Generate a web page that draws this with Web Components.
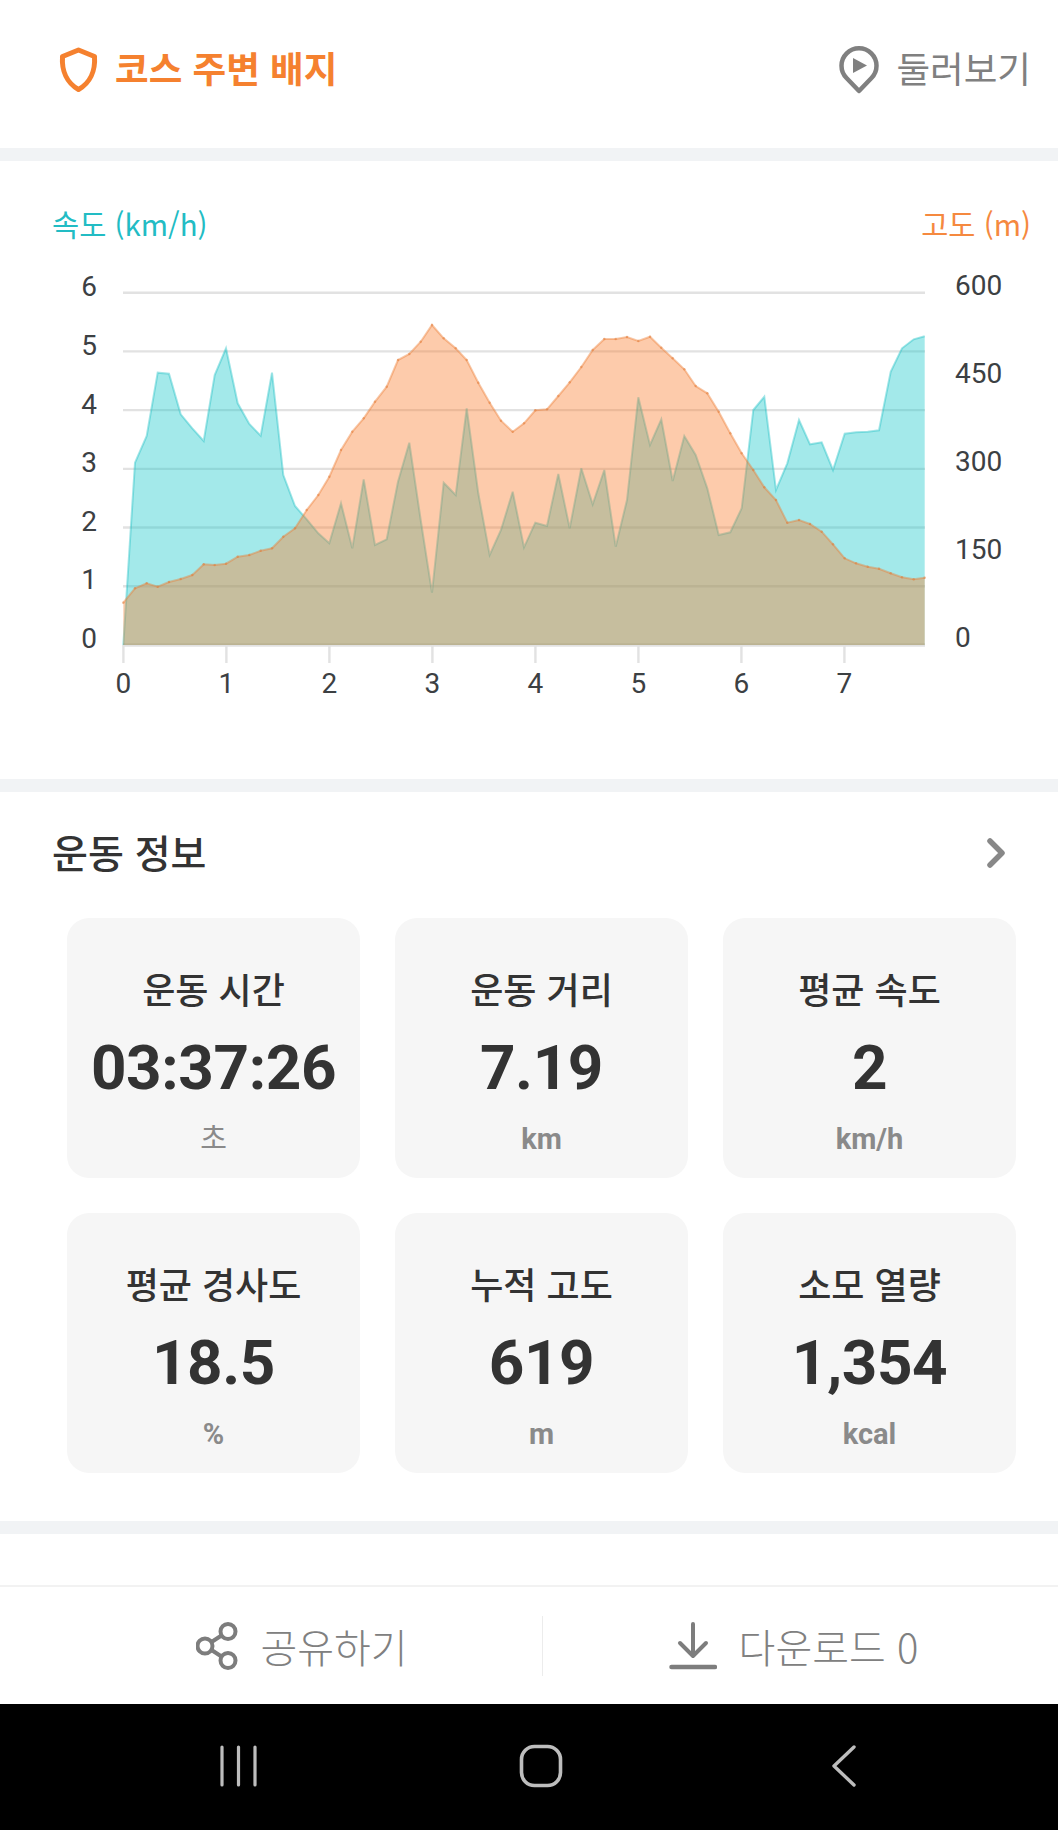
<!DOCTYPE html>
<html lang="ko">
<head>
<meta charset="utf-8">
<title>코스 기록</title>
<style>
  html, body { margin: 0; padding: 0; background: #fff; }
  body { font-family: "Noto Sans CJK KR", Roboto, sans-serif; width: 1058px; height: 1830px; overflow: hidden; }
</style>
</head>
<body>
  <course-head></course-head>
  <pace-chart></pace-chart>
  <stat-panel heading="운동 정보">
    <stat-card label="운동 시간" value="03:37:26" unit="초" plain></stat-card>
    <stat-card label="운동 거리" value="7.19" unit="km"></stat-card>
    <stat-card label="평균 속도" value="2" unit="km/h"></stat-card>
    <stat-card label="평균 경사도" value="18.5" unit="%"></stat-card>
    <stat-card label="누적 고도" value="619" unit="m"></stat-card>
    <stat-card label="소모 열량" value="1,354" unit="kcal"></stat-card>
  </stat-panel>
  <action-bar></action-bar>
  <soft-keys></soft-keys>

<script>
class CourseHead extends HTMLElement {
  constructor() {
    super();
    this.attachShadow({ mode: 'open' });
  }

  connectedCallback() {
    this.shadowRoot.innerHTML = `
      <style>
        :host {
          display: flex;
          justify-content: space-between;
          align-items: center;
          box-sizing: border-box;
          height: 148px;
          padding: 0 27px 8px 58px;
          font-family: "Noto Sans CJK KR", sans-serif;
        }
        .side { display: flex; align-items: center; }
        .side span { margin-bottom: 5px; }
        .badge { color: #f5812f; font-size: 36.6px; font-weight: 700; gap: 17px; }
        .tour { color: #808080; font-size: 36.6px; gap: 17px; }
        svg { display: block; fill: none; }
      </style>
      <div class="side badge">
        <svg width="40" height="46" viewBox="0 0 40 46">
          <path d="M20.5 3 L36.5 9.5 C37.5 24 32 36 20.5 42.5 C9 36 3.5 24 4.5 9.5 Z"
                stroke="#f5812f" stroke-width="5" stroke-linejoin="round"/>
        </svg>
        <span>코스 주변 배지</span>
      </div>
      <div class="side tour">
        <svg width="40" height="48" viewBox="0 0 40 48">
          <path d="M20 45 L7.5 32 A17.5 17.5 0 1 1 32.5 32 Z"
                stroke="#808080" stroke-width="4.5" stroke-linejoin="round"/>
          <path d="M14 12 L28 19.5 L14 27 Z" fill="#808080"/>
        </svg>
        <span>둘러보기</span>
      </div>
    `;
  }
}

// x positions and values for both series, in units of a third of a pixel
const SAMPLE_X = [190,225,260,293,327,362,397,431,464,498,533,568,602,636,670,705,740,775,808,843,877,911,945,980,1014,1048,1082,1116,1151,1187,1220,1255,1289,1323,1358,1392,1426,1461,1495,1529,1564,1598,1633,1667,1701,1735,1770,1804,1838,1873,1907,1942,1976,2011,2045,2080,2113,2148,2182,2217,2250,2285,2319,2354,2388,2423,2457,2492,2526,2561,2594];
const SPEED_Y = [1155,608,528,338,341,463,505,543,345,265,430,492,527,338,645,738,778,820,850,730,865,658,855,838,665,548,780,998,668,705,445,700,885,810,695,862,788,798,642,805,625,733,630,860,720,412,555,478,663,528,585,685,825,817,745,450,410,690,610,480,553,547,630,521,517,515,511,335,265,238,229];
const ALTITUDE_Y = [1028,985,970,980,966,957,945,913,915,911,890,885,872,865,830,805,750,705,650,570,515,475,425,380,300,282,245,195,235,265,300,368,428,482,515,490,451,448,408,367,321,270,237,237,231,243,230,263,295,328,378,400,455,520,580,630,682,720,788,780,792,815,853,895,910,920,926,940,952,958,953];

class PaceChart extends HTMLElement {
  constructor() {
    super();
    this.attachShadow({ mode: 'open' });
  }

  connectedCallback() {
    const px = (x) => (60 + x / 3).toFixed(1);
    const py = (y) => (y / 3).toFixed(1);
    const line = (ys) => ys.map((y, i) => `${px(SAMPLE_X[i])},${py(y)}`).join(' ');
    const area = (ys) => `${px(190)},${py(1155)} ${line(ys)} ${px(2594)},${py(1155)}`;

    const left = [0, 1, 2, 3, 4, 5, 6];
    const right = [0, 150, 300, 450, 600];
    const ticks = [0, 1, 2, 3, 4, 5, 6, 7];

    const grid = left.map((n) => {
      const y = 385 - n * 58.72;
      return `<line x1="123" x2="925" y1="${y}" y2="${y}" stroke="#e2e2e2" stroke-width="${n ? 2.4 : 3.5}"/>`;
    }).join('');
    const tickMarks = ticks.map((n) => {
      const x = 123.4 + n * 103;
      return `<line x1="${x}" x2="${x}" y1="385" y2="403" stroke="#e2e2e2" stroke-width="2.4"/>
              <text x="${x}" y="433" text-anchor="middle">${n}</text>`;
    }).join('');
    const leftLabels = left.map((n) => `<text x="89" y="${388 - n * 58.6}" text-anchor="middle">${n}</text>`).join('');
    const rightLabels = right.map((n, i) => `<text x="955" y="${387 - i * 88}">${n}</text>`).join('');
    const dots = ALTITUDE_Y.map((y, i) => `<circle cx="${px(SAMPLE_X[i])}" cy="${py(y)}" r="1.2"/>`).join('');

    this.shadowRoot.innerHTML = `
      <style>
        :host {
          display: block;
          box-sizing: border-box;
          height: 631px;
          border-top: 13px solid #f1f3f5;
          font-family: "Noto Sans CJK KR", sans-serif;
        }
        .legend {
          display: flex;
          justify-content: space-between;
          box-sizing: border-box;
          height: 99px;
          padding: 44px 27px 0 52px;
          font-size: 29.5px;
          line-height: 36px;
        }
        .speed { color: #22bcc4; }
        .altitude { color: #f5893f; }
        svg { display: block; }
        text { font-family: Roboto, sans-serif; font-size: 28px; fill: #3c4043; }
      </style>
      <div class="legend">
        <span class="speed">속도 (km/h)</span>
        <span class="altitude">고도 (m)</span>
      </div>
      <svg width="1058" height="460" viewBox="0 0 1058 460">
        ${grid}
        ${tickMarks}
        ${leftLabels}
        ${rightLabels}
        <polygon points="${area(SPEED_Y)}" fill="rgba(25,200,202,.4)"/>
        <polyline points="${line(SPEED_Y)}" fill="none" stroke="rgba(25,190,195,.4)" stroke-width="2"/>
        <polygon points="${area(ALTITUDE_Y)}" fill="rgba(250,125,45,.4)"/>
        <polyline points="${line(ALTITUDE_Y)}" fill="none" stroke="rgba(235,125,50,.42)" stroke-width="2"/>
        <g fill="rgba(225,120,50,.5)">${dots}</g>
      </svg>
    `;
  }
}

class StatPanel extends HTMLElement {
  constructor() {
    super();
    this.attachShadow({ mode: 'open' });
  }

  connectedCallback() {
    this.shadowRoot.innerHTML = `
      <style>
        :host {
          display: block;
          box-sizing: border-box;
          height: 755px;
          border-top: 13px solid #f1f3f5;
          border-bottom: 13px solid #f1f3f5;
          font-family: "Noto Sans CJK KR", sans-serif;
        }
        header {
          display: flex;
          justify-content: space-between;
          align-items: center;
          box-sizing: border-box;
          height: 122px;
          padding: 0 53px 0 52px;
          margin-bottom: 4px;
        }
        h2 { margin: 0 0 4px; font-size: 39px; font-weight: 500; color: #333; line-height: 1; }
        .grid {
          display: grid;
          grid-template-columns: repeat(3, 293px);
          gap: 35px;
          padding-left: 67px;
        }
        svg { display: block; fill: none; }
      </style>
      <header>
        <h2>${this.getAttribute('heading')}</h2>
        <svg width="18" height="30" viewBox="0 0 18 30">
          <path d="M3 3 L15 15 L3 27" stroke="#888" stroke-width="5.5" stroke-linecap="round" stroke-linejoin="round"/>
        </svg>
      </header>
      <div class="grid"><slot></slot></div>
    `;
  }
}

class StatCard extends HTMLElement {
  constructor() {
    super();
    this.attachShadow({ mode: 'open' });
  }

  connectedCallback() {
    this.shadowRoot.innerHTML = `
      <style>
        :host {
          display: flex;
          flex-direction: column;
          align-items: center;
          box-sizing: border-box;
          height: 260px;
          padding-top: 45px;
          border-radius: 22px;
          background: #f6f6f6;
          font-family: "Noto Sans CJK KR", sans-serif;
        }
        .label { font-size: 36px; font-weight: 500; color: #333; line-height: 50px; }
        .value { font-family: Roboto, sans-serif; font-size: 62px; font-weight: 700; letter-spacing: -.4px; color: #333; line-height: 70px; margin-top: 20px; }
        .unit { font-family: Roboto, "Noto Sans CJK KR", sans-serif; font-size: 29px; font-weight: 700; color: #8a8a8a; line-height: 40px; margin-top: 16px; }
        :host([plain]) .unit { font-weight: 400; }
      </style>
      <div class="label">${this.getAttribute('label')}</div>
      <div class="value">${this.getAttribute('value')}</div>
      <div class="unit">${this.getAttribute('unit')}</div>
    `;
  }
}

class ActionBar extends HTMLElement {
  constructor() {
    super();
    this.attachShadow({ mode: 'open' });
  }

  connectedCallback() {
    this.shadowRoot.innerHTML = `
      <style>
        :host {
          display: grid;
          grid-template-columns: 542px 1fr;
          align-items: center;
          box-sizing: border-box;
          height: 119px;
          margin-top: 51px;
          border-top: 2px solid #f2f2f2;
          color: #808080;
          font-family: "Noto Sans CJK KR", sans-serif;
          font-size: 40px;
          font-weight: 300;
        }
        .btn { display: flex; justify-content: center; align-items: center; gap: 22px; height: 60px; box-sizing: border-box; }
        .share { padding-left: 62px; }
        .download { padding-right: 14px; border-left: 1px solid #ececec; }
        svg { display: block; fill: none; stroke: #7d7d7d; }
      </style>
      <div class="btn share">
        <svg width="42" height="48" viewBox="0 0 42 48">
          <circle cx="32" cy="9.5" r="7.5" stroke-width="4"/>
          <circle cx="9" cy="24" r="7.5" stroke-width="4"/>
          <circle cx="32" cy="38.5" r="7.5" stroke-width="4"/>
          <path d="M15.5 20 L25.5 13.5 M15.5 28 L25.5 34.5" stroke-width="4"/>
        </svg>
        <span>공유하기</span>
      </div>
      <div class="btn download">
        <svg width="48" height="50" viewBox="0 0 48 50">
          <path d="M24 3 V34 M11 22 L24 35 L37 22" stroke-width="4" stroke-linecap="round" stroke-linejoin="round"/>
          <path d="M2.5 46 H46" stroke-width="4.5" stroke-linecap="round"/>
        </svg>
        <span>다운로드 0</span>
      </div>
    `;
  }
}

class SoftKeys extends HTMLElement {
  constructor() {
    super();
    this.attachShadow({ mode: 'open' });
  }

  connectedCallback() {
    this.shadowRoot.innerHTML = `
      <style>
        :host {
          display: flex;
          align-items: center;
          box-sizing: border-box;
          height: 126px;
          padding: 0 0 3px 219px;
          background: #000;
        }
        svg { display: block; fill: none; stroke: #bdbdbd; stroke-linecap: round; stroke-linejoin: round; }
        .home { margin-left: 260px; }
        .back { margin-left: 268px; }
      </style>
      <svg class="recents" width="40" height="42" viewBox="0 0 40 42">
        <path d="M3 2 V40 M19.5 2 V40 M36 2 V40" stroke-width="3.2"/>
      </svg>
      <svg class="home" width="44" height="44" viewBox="0 0 44 44">
        <rect x="2.5" y="2.5" width="39" height="39" rx="13" stroke-width="3.6"/>
      </svg>
      <svg class="back" width="26" height="44" viewBox="0 0 26 44">
        <path d="M23 3 L3 22 L23 41" stroke-width="3.4"/>
      </svg>
    `;
  }
}

customElements.define('course-head', CourseHead);
customElements.define('pace-chart', PaceChart);
customElements.define('stat-panel', StatPanel);
customElements.define('stat-card', StatCard);
customElements.define('action-bar', ActionBar);
customElements.define('soft-keys', SoftKeys);
</script>
</body>
</html>
